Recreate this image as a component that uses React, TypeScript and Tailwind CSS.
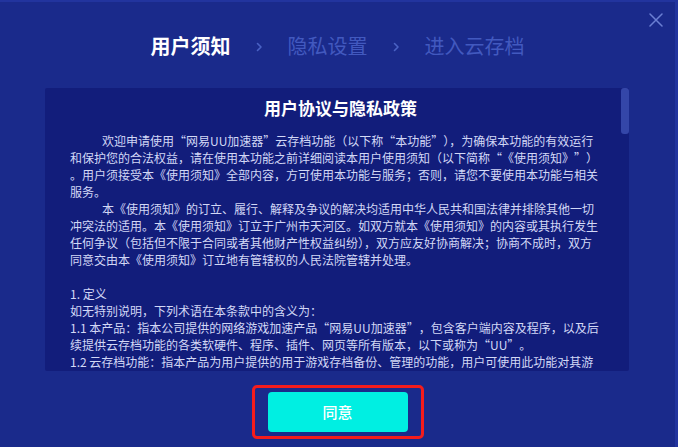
import React from 'react';

const cjk = { fontFamily: '"Noto Sans CJK SC", "Noto Sans", sans-serif' };

const Chevron: React.FC = () => (
  <svg width="7" height="10" viewBox="0 0 7 10" className="mt-[2px]">
    <path d="M1.5 1.5 L5 5 L1.5 8.5" fill="none" stroke="#4a62c4" strokeWidth="1.6" strokeLinecap="round" strokeLinejoin="round" />
  </svg>
);

type Line = { text: string; indent?: boolean };

const lines: Line[] = [
  { text: '欢迎申请使用“网易UU加速器”云存档功能（以下称“本功能”），为确保本功能的有效运行', indent: true },
  { text: '和保护您的合法权益，请在使用本功能之前详细阅读本用户使用须知（以下简称“《使用须知》”）' },
  { text: '。用户须接受本《使用须知》全部内容，方可使用本功能与服务；否则，请您不要使用本功能与相关' },
  { text: '服务。' },
  { text: '本《使用须知》的订立、履行、解释及争议的解决均适用中华人民共和国法律并排除其他一切', indent: true },
  { text: '冲突法的适用。本《使用须知》订立于广州市天河区。如双方就本《使用须知》的内容或其执行发生' },
  { text: '任何争议（包括但不限于合同或者其他财产性权益纠纷），双方应友好协商解决；协商不成时，双方' },
  { text: '同意交由本《使用须知》订立地有管辖权的人民法院管辖并处理。' },
  { text: '' },
  { text: '1. 定义' },
  { text: '如无特别说明，下列术语在本条款中的含义为：' },
  { text: '1.1 本产品：指本公司提供的网络游戏加速产品“网易UU加速器”，包含客户端内容及程序，以及后' },
  { text: '续提供云存档功能的各类软硬件、程序、插件、网页等所有版本，以下或称为“UU”。' },
  { text: '1.2 云存档功能：指本产品为用户提供的用于游戏存档备份、管理的功能，用户可使用此功能对其游' },
];

// curly quotes take a full-width cell, as in the original dialog
const withQuotes = (s: string) =>
  s.split(/([“”])/).map((part, i) => {
    if (part === '“') return <span key={i} className="inline-block w-[12px] text-right">{part}</span>;
    if (part === '”') return <span key={i} className="inline-block w-[12px] text-left">{part}</span>;
    return <React.Fragment key={i}>{part}</React.Fragment>;
  });

export default function App() {
  return (
    <div
      lang="zh-CN"
      className="relative w-[678px] h-[447px] overflow-hidden bg-[#1a2a8b] border-t-2 border-r-[3px] border-[#22349e] flex flex-col"
      style={cjk}
    >
      <button className="absolute top-[10px] right-[11px] w-[16px] h-[16px] flex items-center justify-center">
        <svg width="14" height="14" viewBox="0 0 14 14">
          <path d="M1 1 L13 13 M13 1 L1 13" stroke="#6b7fd3" strokeWidth="1.5" strokeLinecap="round" />
        </svg>
      </button>

      <div className="h-[86px] pt-[30px] flex justify-center items-start">
        <div className="flex items-center gap-[25px] h-[28px] text-[20px] leading-[28px]">
          <span className="font-bold text-white">用户须知</span>
          <Chevron />
          <span className="text-[#4259bf]">隐私设置</span>
          <Chevron />
          <span className="text-[#4259bf]">进入云存档</span>
        </div>
      </div>

      <div className="ml-[45px] mr-[46px] h-[283px] bg-[#121d7b] rounded-[2px] flex overflow-hidden">
        <div className="flex-1 overflow-hidden pl-[25px] pt-[8px]">
          <h2 className="text-center text-[17px] leading-[24px] font-bold text-white pr-[10px]">用户协议与隐私政策</h2>
          <div className="mt-[12px] text-[12px] leading-[17px] text-[#d2d8f6]">
            {lines.map((l, i) => (
              <div key={i} className={`whitespace-nowrap h-[17px] ${l.indent ? 'pl-[32px]' : ''}`}>
                {withQuotes(l.text)}
              </div>
            ))}
          </div>
        </div>
        <div className="w-[8px] flex flex-col">
          <div className="h-[46px] rounded-[3px] bg-[#3446a8]" />
        </div>
      </div>

      <div className="flex justify-center mt-[14px]">
        <div className="border-[3px] border-[#f41c1c] rounded-[5px] px-[13px] py-[4px]">
          <button className="w-[140px] h-[40px] rounded-[4px] bg-[#00efe2] text-white text-[15px] font-medium">
            同意
          </button>
        </div>
      </div>
    </div>
  );
}
